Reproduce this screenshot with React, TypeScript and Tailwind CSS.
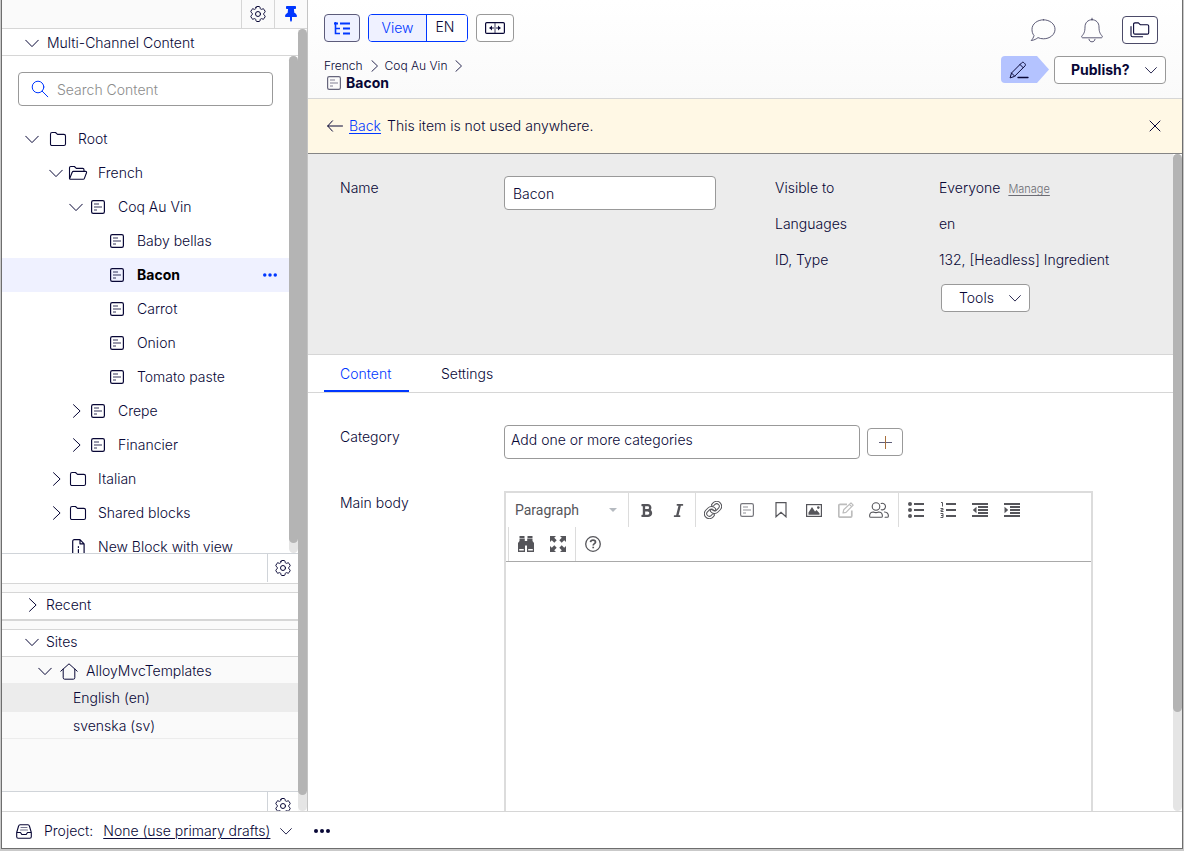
import type { ReactNode } from "react";
import clsx from "clsx";
import { FaBold, FaItalic, FaThumbtack } from "react-icons/fa";
import { HiOutlineCog6Tooth } from "react-icons/hi2";

const stroke = {
  fill: "none",
  stroke: "currentColor",
  strokeLinecap: "round",
  strokeLinejoin: "round",
} as const;

function ChevronDown({ size = 14 }: { size?: number }) {
  return (
    <svg width={size} height={size} viewBox="0 0 14 14" {...stroke} className="shrink-0">
      <path d="M.7 4.200 7 10.600l6.300-6.400" />
    </svg>
  );
}

function ChevronRight({ size = 14 }: { size?: number }) {
  return (
    <svg width={size} height={size} viewBox="0 0 14 14" {...stroke} className="shrink-0">
      <path d="m4.500.7 6.600 6.300-6.600 6.300" />
    </svg>
  );
}

function Gear() {
  return <HiOutlineCog6Tooth size={20} strokeWidth={1.2} />;
}

function FolderIcon() {
  return (
    <svg width="18" height="16" viewBox="0 0 18 16" {...stroke} strokeWidth="1.100">
      <path d="M1.500 3.200c0-1 .6-1.700 1.600-1.700h3.400l2 1.900h6.400c1 0 1.600.6 1.600 1.600v7.900c0 1-.6 1.600-1.600 1.600H3.100c-1 0-1.600-.6-1.600-1.600z" />
    </svg>
  );
}

function FolderOpenIcon() {
  return (
    <svg width="20" height="16" viewBox="0 0 20 16" {...stroke} strokeWidth="1.100">
      <path d="M1.500 13.500V2.800c0-.8.500-1.300 1.300-1.300h3.600l1.900 1.900h6.400c.8 0 1.300.5 1.300 1.300v1.600" />
      <path d="M1.600 13.800 4.200 7.300c.2-.6.600-.9 1.200-.9h12.200c.8 0 1.200.6.900 1.300l-2.100 5.700c-.2.6-.7.900-1.300.9H2.400c-.5 0-.9-.2-.9-.8" />
    </svg>
  );
}

function BlockIcon() {
  return (
    <svg width="14" height="14" viewBox="0 0 14 14" fill="none" stroke="currentColor">
      <rect x=".6" y=".6" width="12.800" height="12.800" rx="1.600" strokeWidth="1.200" />
      <path d="M3 4h5M3 7h8M3 10h3" strokeWidth="1.500" opacity=".55" />
    </svg>
  );
}

function FileIcon() {
  return (
    <svg width="13" height="16" viewBox="0 0 13 16" {...stroke} strokeWidth="1.200">
      <path d="M8 .7H2.300C1.300.7.7 1.300.7 2.300v11.400c0 1 .6 1.600 1.600 1.600h8.200c1 0 1.600-.6 1.600-1.600V4.800zM8 .7v4.100h4.100" />
      <path d="M6.400 7.500v1M6.400 10.500v3" />
    </svg>
  );
}

function HomeIcon() {
  return (
    <svg width="18" height="17" viewBox="0 0 18 17" {...stroke}>
      <path d="M.8 8.200 9 .8l8.200 7.400M3.200 6.200v8.600c0 .8.500 1.400 1.400 1.400h8.800c.9 0 1.400-.6 1.400-1.400V6.200" />
    </svg>
  );
}

function Dots({ size = 16 }: { size?: number }) {
  return (
    <svg width={size} height="4" viewBox="0 0 16 4" fill="currentColor">
      <circle cx="2" cy="2" r="2" />
      <circle cx="8" cy="2" r="2" />
      <circle cx="14" cy="2" r="2" />
    </svg>
  );
}

function Scrollbar({ thumb }: { thumb: string }) {
  return (
    <div className="w-[9px] shrink-0 rounded-full bg-[#e5e5e5]">
      <div className={clsx("rounded-full bg-[#b4b4b4]", thumb)} />
    </div>
  );
}

type Node = {
  label: string;
  level: 0 | 1 | 2 | 3;
  icon: ReactNode;
  state?: "open" | "closed";
  active?: boolean;
};

const tree: Node[] = [
  { label: "Root", level: 0, icon: <FolderIcon />, state: "open" },
  { label: "French", level: 1, icon: <FolderOpenIcon />, state: "open" },
  { label: "Coq Au Vin", level: 2, icon: <BlockIcon />, state: "open" },
  { label: "Baby bellas", level: 3, icon: <BlockIcon /> },
  { label: "Bacon", level: 3, icon: <BlockIcon />, active: true },
  { label: "Carrot", level: 3, icon: <BlockIcon /> },
  { label: "Onion", level: 3, icon: <BlockIcon /> },
  { label: "Tomato paste", level: 3, icon: <BlockIcon /> },
  { label: "Crepe", level: 2, icon: <BlockIcon />, state: "closed" },
  { label: "Financier", level: 2, icon: <BlockIcon />, state: "closed" },
  { label: "Italian", level: 1, icon: <FolderIcon />, state: "closed" },
  { label: "Shared blocks", level: 1, icon: <FolderIcon />, state: "closed" },
  { label: "New Block with view", level: 1, icon: <FileIcon /> },
];

const indent = ["pl-[23px]", "pl-[47px]", "pl-[67px]", "pl-[86px]"];

function TreeRow({ node }: { node: Node }) {
  return (
    <li className={clsx("flex h-[34px] items-center pr-3", indent[node.level], node.active && "bg-[#eff1ff]")}>
      <span className={clsx("shrink-0", node.level === 0 ? "w-[23px]" : "w-[19px]")}>
        {node.state === "open" && <ChevronDown />}
        {node.state === "closed" && <ChevronRight />}
      </span>
      <span className="flex w-5 shrink-0 justify-center">{node.icon}</span>
      <a href="#" className={clsx("ml-2.5 whitespace-nowrap", node.active && "font-bold text-black")}>
        {node.label}
      </a>
      {node.active && (
        <button aria-label="More" className="ml-auto text-[#0037ff]">
          <Dots size={14} />
        </button>
      )}
    </li>
  );
}

function PanelFooter() {
  return (
    <div className="flex h-[30px] shrink-0 justify-end overflow-hidden border-t border-[#d0d4d9] bg-white">
      <button aria-label="Settings" className="flex h-7 w-[31px] items-center justify-center border-l border-[#d0d4d9]">
        <Gear />
      </button>
    </div>
  );
}

function Sidebar() {
  return (
    <aside className="flex w-[306px] shrink-0 flex-col border-r border-[#c4c4c4] bg-[#fafafa]">
      <div className="flex h-[29px] shrink-0 justify-end border-b border-[#d6d6d6]">
        <button aria-label="Settings" className="flex w-[33px] items-center justify-center border-l border-[#d6d6d6]">
          <Gear />
        </button>
        <button aria-label="Pin" className="flex w-[33px] items-center justify-center border-l border-[#d6d6d6] text-[#0037ff]">
          <FaThumbtack size={16} />
        </button>
      </div>

      <div className="flex min-h-0 flex-1">
        <div className="flex min-w-0 flex-1 flex-col overflow-hidden">
          <button className="flex h-[27px] shrink-0 items-center gap-2 border-b border-[#d6d6d6] bg-white pt-0.5 pl-[23px] text-left">
            <ChevronDown />
            Multi-Channel Content
          </button>
          <div className="flex h-[497px] shrink-0 bg-white">
            <div className="min-w-0 flex-1 overflow-hidden">
              <label className="mx-4 my-4 flex h-[34px] items-center gap-2 rounded border border-[#999] pl-3">
                <svg width="18" height="18" viewBox="0 0 18 18" {...stroke} className="text-[#0037ff]">
                  <circle cx="7" cy="7" r="5.800" />
                  <path d="m11.200 11.200 5.600 5.600" />
                </svg>
                <input
                  aria-label="Search Content"
                  placeholder="Search Content"
                  className="min-w-0 flex-1 pt-0.5 outline-none placeholder:text-[#8c8c8c]"
                />
              </label>
              <ul>
                {tree.map((node) => (
                  <TreeRow key={node.label} node={node} />
                ))}
              </ul>
            </div>
            <Scrollbar thumb="h-[98%]" />
          </div>
          <PanelFooter />

          <div className="h-[9px] shrink-0 border-t border-[#d6d6d6]" />
          <button className="flex h-[29px] shrink-0 items-center gap-[7px] border-t border-b-2 border-[#d6d6d6] bg-white pb-0.5 pl-[23px] text-left">
            <ChevronRight />
            Recent
          </button>
          <div className="h-2 shrink-0" />
          <button className="flex h-[28px] shrink-0 items-center gap-[7px] border-y border-[#d6d6d6] bg-white pb-0.5 pl-[23px] text-left">
            <ChevronDown />
            Sites
          </button>
          <ul className="shrink-0 border-b border-[#ececec]">
            <li className="flex h-[26px] items-center pt-0.5 pl-9">
              <ChevronDown />
              <span className="mr-2 ml-2">
                <HomeIcon />
              </span>
              <a href="#">AlloyMvcTemplates</a>
            </li>
            <li className="flex h-[29px] items-center bg-[#ececec] pl-[71px]">
              <a href="#">English (en)</a>
            </li>
            <li className="flex h-[26px] items-center pt-0.5 pl-[71px]">
              <a href="#">svenska (sv)</a>
            </li>
          </ul>
          <div className="h-[52px] shrink-0" />
          <PanelFooter />
        </div>
        <Scrollbar thumb="h-[98%]" />
      </div>
    </aside>
  );
}

function Header() {
  return (
    <header className="flex shrink-0 justify-between border-b border-[#d6d6d6] bg-linear-to-b from-white to-[#fafafa] px-4 pb-1.5">
      <div className="pt-3.5">
        <div className="flex h-7 gap-2">
          <button aria-label="Navigation" className="flex w-9 items-center justify-center rounded border border-[#5c5b7a] bg-[#eff1ff] text-[#0037ff]">
            <svg width="16" height="13" viewBox="0 0 16 13" fill="none" stroke="currentColor" strokeWidth="2">
              <path d="M0 1.500h4M6 1.500h10M9 6.500h7M9 11.500h7" />
              <path d="M1.500 0v11.500H6M1.500 6.500H6" strokeWidth="1.600" />
            </svg>
          </button>
          <div className="flex w-[100px] overflow-hidden rounded border border-[#0037ff]">
            <button className="w-[58px] border-r border-[#0037ff] bg-[#eff1ff] text-[#0037ff]">View</button>
            <button className="flex-1 bg-white pr-1 pb-0.5">EN</button>
          </div>
          <button aria-label="Compare" className="flex w-[38px] items-center justify-center rounded border border-[#999] bg-white">
            <svg width="20" height="12" viewBox="0 0 20 12" {...stroke}>
              <rect x=".6" y=".6" width="18.800" height="10.800" rx="1.200" strokeWidth="1.200" />
              <path d="M10 1.500v9" strokeWidth=".8" />
              <path d="M5 6h3.500M11.500 6H15" />
              <path d="M7 3.500 4.300 6 7 8.500zM13 3.500 15.700 6 13 8.500z" fill="currentColor" stroke="none" />
            </svg>
          </button>
        </div>
        <nav aria-label="Breadcrumb" className="mt-4 flex h-4 items-center gap-[5px] text-xs">
          <a href="#">French</a>
          <ChevronRight size={12} />
          <a href="#">Coq Au Vin</a>
          <ChevronRight size={12} />
        </nav>
        <h1 className="flex h-[18px] items-center gap-[5px] pl-[3px] font-bold">
          <span className="text-[#66657c]">
            <BlockIcon />
          </span>
          Bacon
        </h1>
      </div>

      <div className="flex flex-col items-end gap-3 pt-4">
        <div className="flex h-7 items-center pr-2 text-[#4b4a68]">
          <button aria-label="Comments" className="mr-6">
            <svg width="26" height="24" viewBox="0 0 26 24" {...stroke} strokeWidth=".9">
              <path d="M13.500 1.800c6.400 0 11.500 4.200 11.500 9.500s-5.100 9.500-11.500 9.500c-2 0-3.900-.4-5.500-1.200-1.500 1.200-3.700 2.600-6.800 2.900 1.300-1.400 2.400-3 2.800-5C2.500 15.800 2 13.700 2 11.300c0-5.300 5.100-9.500 11.500-9.500z" />
            </svg>
          </button>
          <button aria-label="Notifications" className="mr-[18px]">
            <svg width="24" height="26" viewBox="0 0 24 26" {...stroke} strokeWidth=".9">
              <path d="M12 1.200v1.500M12 2.700c-4.200 0-7 3.100-7 7.200 0 5.600-1.500 7.200-3 9-.8 1-.2 1.900.9 1.900h18.200c1.100 0 1.700-.9.9-1.900-1.500-1.800-3-3.400-3-9 0-4.100-2.800-7.200-7-7.200zM9 22.300c.2 1.600 1.400 2.500 3 2.500s2.800-.9 3-2.500" />
            </svg>
          </button>
          <button aria-label="Assets" className="flex h-7 w-9 items-center justify-center rounded border border-[#4b4a68] bg-white text-[#080736]">
            <svg width="20" height="16" viewBox="0 0 20 16" {...stroke} strokeWidth="1.100">
              <path d="M3.600 2.300c0-.9.500-1.400 1.400-1.400h3.400l1.800 1.800h7.100c.9 0 1.400.5 1.400 1.400v6.600c0 .9-.5 1.400-1.400 1.400H5c-.9 0-1.400-.5-1.400-1.400z" />
              <path d="M1 4.500v8.700c0 .9.600 1.600 1.600 1.600h10" />
            </svg>
          </button>
        </div>
        <div className="flex gap-[5px]">
          <div className="flex h-[27px] w-12 items-center rounded-sm bg-[#b4c3ff] pl-2 [clip-path:polygon(0_0,75%_0,100%_50%,75%_100%,0_100%)]">
            <svg width="20" height="18" viewBox="0 0 20 18" {...stroke}>
              <path d="M1.200 16.500 2.500 12 12.700 1.800c.7-.7 1.600-.7 2.300 0l.9.900c.7.700.7 1.600 0 2.300L5.700 15.200zM11 3.500l3.200 3.200M2.500 12l3.200 3.200" />
              <path d="M9 16.500h10" strokeWidth="1.300" />
            </svg>
          </div>
          <button className="flex h-7 w-28 items-center justify-between rounded border border-[#999] bg-white pr-2 pl-4 font-bold">
            Publish?
            <ChevronDown size={12} />
          </button>
        </div>
      </div>
    </header>
  );
}

function Notice() {
  return (
    <div className="flex h-[55px] shrink-0 items-center border-b border-[#858585] bg-[#fff8e5] pr-[21px] pl-[19px]">
      <svg width="16" height="12" viewBox="0 0 16 12" {...stroke}>
        <path d="M5.500.8.700 6l4.800 5.200M.7 6h14.800" />
      </svg>
      <a href="#" className="ml-1.5 text-[#0037ff] underline underline-offset-2">
        Back
      </a>
      <p className="ml-1.5">This item is not used anywhere.</p>
      <button aria-label="Close" className="ml-auto">
        <svg width="12" height="12" viewBox="0 0 12 12" {...stroke}>
          <path d="m1 1 10 10M11 1 1 11" />
        </svg>
      </button>
    </div>
  );
}

function Property({ label, children }: { label: string; children: ReactNode }) {
  return (
    <div className="flex h-9 items-center">
      <dt className="w-[164px] shrink-0">{label}</dt>
      <dd className="whitespace-nowrap">{children}</dd>
    </div>
  );
}

function Summary() {
  return (
    <section className="grid shrink-0 grid-cols-2 gap-[5px] border-b border-[#d6d6d6] bg-[#ececec] pb-[42px]">
      <div className="flex items-start pt-[22px] pl-8">
        <label htmlFor="name" className="w-[164px] shrink-0 leading-6">
          Name
        </label>
        <input id="name" defaultValue="Bacon" className="h-[34px] w-[212px] rounded border border-[#999] bg-white px-2" />
      </div>
      <div className="pt-4 pl-8">
        <dl>
          <Property label="Visible to">
            Everyone
            <a href="#" className="ml-2 text-[11px] text-[#6c6c74] underline underline-offset-2">
              Manage
            </a>
          </Property>
          <Property label="Languages">en</Property>
          <Property label="ID, Type">132, [Headless] Ingredient</Property>
        </dl>
        <button className="mt-1.5 ml-[166px] flex h-7 w-[89px] items-center justify-between rounded border border-[#999] bg-white pr-2 pl-[17px]">
          Tools
          <ChevronDown size={12} />
        </button>
      </div>
    </section>
  );
}

function ToolButton({ label, wide, children }: { label: string; wide?: boolean; children: ReactNode }) {
  return (
    <button aria-label={label} className={clsx("flex h-full shrink-0 items-center justify-center", wide ? "w-[34px]" : "w-8")}>
      {children}
    </button>
  );
}

function Toolbar() {
  return (
    <div className="flex flex-wrap border-b border-[#a9a9a9] text-[#55555a]">
      <div className="relative h-[34px] w-[123px] border-r border-[#dcdcdc]">
        <select aria-label="Format" className="h-full w-full appearance-none pl-[9px] font-['Roboto',sans-serif] font-normal outline-none">
          <option>Paragraph</option>
        </select>
        <svg width="8" height="4" viewBox="0 0 8 4" fill="#b5bac0" className="pointer-events-none absolute top-[15px] right-[11px]">
          <path d="M0 0h8L4 4z" />
        </svg>
      </div>
      <div className="flex h-[34px] border-r border-[#dcdcdc] px-px">
        <ToolButton label="Bold">
          <FaBold size={15} />
        </ToolButton>
        <ToolButton label="Italic">
          <FaItalic size={15} />
        </ToolButton>
      </div>
      <div className="flex h-[34px] border-r border-[#dcdcdc] pr-0.5">
        <ToolButton label="Link" wide>
          <svg width="18" height="18" viewBox="0 0 24 24" {...stroke}>
            <path d="M10 13a5 5 0 0 0 7.540.54l3-3a5 5 0 0 0-7.070-7.070l-1.720 1.710" strokeWidth="4.600" />
            <path d="M10 13a5 5 0 0 0 7.540.54l3-3a5 5 0 0 0-7.070-7.070l-1.720 1.710" stroke="#fff" strokeWidth="1.900" />
            <path d="M14 11a5 5 0 0 0-7.540-.54l-3 3a5 5 0 0 0 7.070 7.070l1.710-1.710" strokeWidth="4.600" />
            <path d="M14 11a5 5 0 0 0-7.540-.54l-3 3a5 5 0 0 0 7.070 7.070l1.710-1.710" stroke="#fff" strokeWidth="1.900" />
          </svg>
        </ToolButton>
        <ToolButton label="Block" wide>
          <span className="text-[#77777d]">
            <BlockIcon />
          </span>
        </ToolButton>
        <ToolButton label="Anchor" wide>
          <svg width="12" height="16" viewBox="0 0 12 16" fill="none" stroke="currentColor" strokeWidth="1.200">
            <path d="M1 .6h10v14.200l-5-4.600-5 4.600z" />
          </svg>
        </ToolButton>
        <ToolButton label="Image">
          <svg width="16" height="13" viewBox="0 0 16 13" fill="currentColor">
            <rect x=".6" y=".6" width="14.800" height="11.800" fill="none" stroke="currentColor" strokeWidth="1.200" />
            <path d="M2.500 10.700V8.500L6 3l3 4.500L10.500 6l3 3.200v1.500z" />
            <circle cx="12.300" cy="3.600" r="1.300" />
          </svg>
        </ToolButton>
        <ToolButton label="Edit image">
          <svg width="16" height="16" viewBox="0 0 16 16" fill="none" stroke="#bdbdbd" strokeWidth="1.700" strokeLinejoin="round">
            <path d="M9 2.300H2.200c-.8 0-1.400.5-1.400 1.300v10.200c0 .8.600 1.400 1.400 1.400h10.200c.8 0 1.400-.6 1.400-1.400V8.500" />
            <path d="m5 11 .7-3.200L13 .9l2.200 2.200-7.200 7.200zM11.500 2.500l2.100 2.100" strokeWidth="1.200" />
          </svg>
        </ToolButton>
        <ToolButton label="Personalize" wide>
          <svg width="20" height="16" viewBox="0 0 20 16" {...stroke} strokeWidth="1.100">
            <circle cx="7" cy="4.500" r="3.800" />
            <path d="M.6 13.900c0-2.500 1.600-3.900 3.900-3.900 1.600.8 3.400.8 5 0 2.300 0 3.900 1.400 3.900 3.900 0 .9-.5 1.400-1.300 1.400H1.900c-.8 0-1.300-.5-1.300-1.400z" />
            <path d="M12.200 1.500c2-.8 4.300.7 4.300 3s-2.100 3.800-4.300 3.200M15.500 10c2.400.2 3.900 1.500 3.900 3.900 0 .9-.5 1.400-1.300 1.400h-2" />
          </svg>
        </ToolButton>
      </div>
      <div className="flex h-[34px] pl-px">
        <ToolButton label="Bullet list">
          <svg width="16" height="16" viewBox="0 0 16 16" fill="currentColor">
            <circle cx="2" cy="2" r="2" />
            <circle cx="2" cy="8" r="2" />
            <circle cx="2" cy="14" r="2" />
            <path d="M6 1h10v2H6zM6 7h10v2H6zM6 13h10v2H6z" />
          </svg>
        </ToolButton>
        <ToolButton label="Numbered list">
          <svg width="16" height="16" viewBox="0 0 16 16" fill="none" stroke="currentColor">
            <path d="M6 2h10M6 8h10M6 14h10" strokeWidth="2" />
            <path d="M1 .5h1.500V4.500M.5 6.500h2.500v1.500H1v1.500h2.500M.5 11.500h2.500v4H.5M1 13.500h2" />
          </svg>
        </ToolButton>
        <ToolButton label="Outdent">
          <svg width="16" height="14" viewBox="0 0 16 14" fill="currentColor">
            <path d="M0 0h16v2H0zM6 3h10v2H6zM6 6h10v2H6zM6 9h10v2H6zM0 12h16v2H0zM4.500 3.800v6.400L.8 7z" />
          </svg>
        </ToolButton>
        <ToolButton label="Indent">
          <svg width="16" height="14" viewBox="0 0 16 14" fill="currentColor">
            <path d="M0 0h16v2H0zM6 3h10v2H6zM6 6h10v2H6zM6 9h10v2H6zM0 12h16v2H0zM.5 3.800v6.400L4.200 7z" />
          </svg>
        </ToolButton>
      </div>
      <div className="ml-0.5 flex h-[34px] border-x border-[#dcdcdc] px-px">
        <ToolButton label="Find">
          <svg width="16" height="16" viewBox="0 0 16 16" fill="currentColor">
            <path d="M1.500 0h5v2h-5zM9.500 0h5v2h-5zM1.500 2.500h5.300V5h2.400V2.500h5.300V5l1.500 2v9H9V9.500H7V16H0V7l1.500-2z" />
            <path d="M1.200 13h4.600v1.600H1.200zM10.200 13h4.600v1.600h-4.600z" fill="#fff" />
          </svg>
        </ToolButton>
        <ToolButton label="Fullscreen">
          <svg width="16" height="16" viewBox="0 0 16 16" fill="currentColor">
            <path d="M0 0h6L4.200 1.800l2.500 2.500-2.400 2.400-2.500-2.500L0 6zM16 0v6l-1.800-1.800-2.500 2.500-2.400-2.400 2.500-2.500L10 0zM0 16v-6l1.800 1.800 2.500-2.500 2.400 2.400-2.500 2.500L6 16zM16 16h-6l1.800-1.800-2.500-2.500 2.400-2.400 2.500 2.500L16 10z" />
          </svg>
        </ToolButton>
      </div>
      <div className="flex h-[34px]">
        <ToolButton label="Help" wide>
          <svg width="16" height="16" viewBox="0 0 16 16" fill="none" stroke="currentColor">
            <circle cx="8" cy="8" r="7.300" strokeWidth="1.300" />
            <path d="M5.500 6.200c.2-1.300 1.200-2 2.500-2 1.500 0 2.500.8 2.500 2 0 1.500-2.300 1.500-2.300 3.300M8.200 10.700v1.600" strokeWidth="1.700" />
          </svg>
        </ToolButton>
      </div>
    </div>
  );
}

function ContentForm() {
  return (
    <section className="flex min-h-0 flex-1 flex-col gap-8 pt-8 pl-8">
      <div className="flex shrink-0 items-start">
        <label htmlFor="category" className="w-[164px] shrink-0 leading-6">
          Category
        </label>
        <button id="category" className="flex h-[34px] w-[356px] items-start rounded border border-[#999] px-1.5 pt-1 text-left">
          Add one or more categories
        </button>
        <button aria-label="Add category" className="mt-[3px] ml-[7px] flex h-7 w-9 items-center justify-center rounded border border-[#999]">
          <svg width="13" height="13" viewBox="0 0 13 13" fill="none" stroke="#5f5e78" className="shrink-0">
            <path d="M0 6.500h13" />
            <path d="M6.500 0v13" stroke="#a8703c" />
          </svg>
        </button>
      </div>
      <div className="flex min-h-0 flex-1 items-stretch">
        <label htmlFor="body" className="w-[164px] shrink-0 leading-6">
          Main body
        </label>
        <div className="flex w-[589px] flex-col border-2 border-b-0 border-[#dcdcdc]">
          <Toolbar />
          <textarea id="body" className="min-h-0 flex-1 resize-none p-2 outline-none" />
        </div>
      </div>
    </section>
  );
}

function StatusBar() {
  return (
    <footer className="flex h-[37px] shrink-0 items-center border-t border-[#d6d6d6] bg-white pt-0.5 pl-3.5">
      <svg width="16" height="15" viewBox="0 0 16 15" {...stroke} strokeWidth="1.100">
        <path d="M.7 8.500 2.600 2c.2-.8.700-1.300 1.500-1.300h7.800c.8 0 1.300.5 1.500 1.300l1.900 6.500v4.300c0 .9-.6 1.500-1.500 1.500H2.200c-.9 0-1.500-.6-1.500-1.500zh3.800l1.300 2h4.400l1.300-2h3.800" />
        <path d="M5 3.500h6M4.500 6h7" opacity=".55" />
      </svg>
      <span className="ml-3">Project:</span>
      <a href="#" className="ml-2.5 flex items-center gap-2.5">
        <span className="underline underline-offset-2">None (use primary drafts)</span>
        <ChevronDown size={12} />
      </a>
      <button aria-label="More options" className="ml-[22px]">
        <Dots />
      </button>
    </footer>
  );
}

export default function App() {
  return (
    <div className="h-screen bg-[#c9c9c9] pr-px pb-0.5 pl-px font-['Inter',sans-serif] text-sm font-light text-[#080736]">
      <div className="flex h-full flex-col border-x border-b border-[#6e6e6e] bg-white">
        <div className="flex min-h-0 flex-1">
          <Sidebar />
          <main className="flex min-w-0 flex-1 flex-col overflow-hidden">
            <Header />
            <Notice />
            <div className="flex min-h-0 flex-1">
              <div className="flex min-w-0 flex-1 flex-col overflow-hidden">
                <Summary />
                <div role="tablist" className="flex h-[38px] shrink-0 border-b border-[#d6d6d6] pl-4">
                  <button role="tab" aria-selected="true" className="w-[85px] border-b-2 border-[#0037ff] pt-0.5 pl-4 text-left text-[#0037ff]">
                    Content
                  </button>
                  <button role="tab" aria-selected="false" className="ml-4 border-b-2 border-transparent px-4 pt-0.5">
                    Settings
                  </button>
                </div>
                <ContentForm />
              </div>
              <Scrollbar thumb="h-[85%]" />
            </div>
          </main>
        </div>
        <StatusBar />
      </div>
    </div>
  );
}
